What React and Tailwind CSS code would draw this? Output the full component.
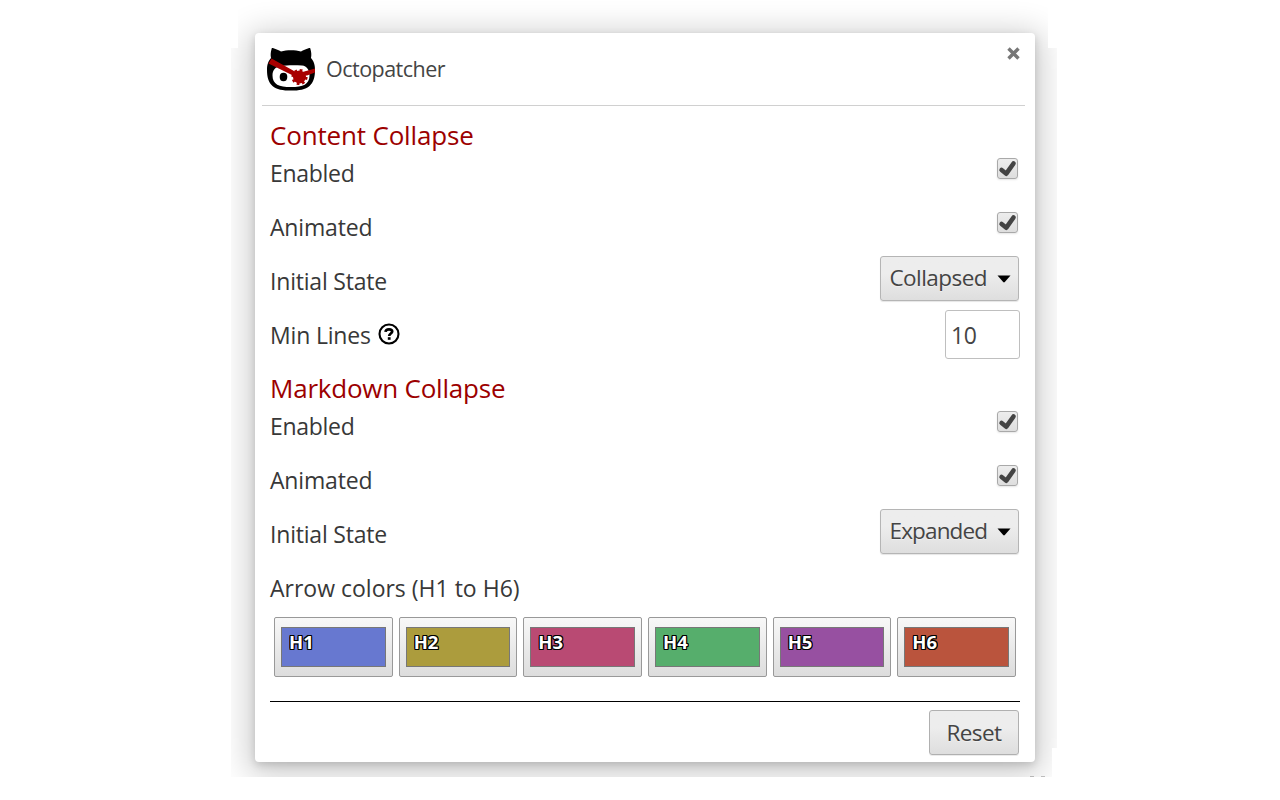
import React from "react";

const swatches = [
  { name: "H1", color: "bg-[#6778d0]" },
  { name: "H2", color: "bg-[#ac9c3d]" },
  { name: "H3", color: "bg-[#b94a73]" },
  { name: "H4", color: "bg-[#56ae6c]" },
  { name: "H5", color: "bg-[#9750a1]" },
  { name: "H6", color: "bg-[#ba543d]" },
];

function Logo() {
  return (
    <svg className="h-12 w-12 shrink-0" viewBox="0 0 48 48">
      <path
        d="M4.5 3.2C4.6 1.8 5.3 1.8 6.5 2.2C9.3 2.9 11.6 4.2 14 5.4C20 3.8 28 3.8 34 5.4C36.4 4.2 38.7 2.9 41.5 2.2C42.7 1.8 43.4 1.8 43.5 3.2C44.4 6.5 44.6 9 44 12C46.8 15.4 48 18.500 48 24C48 31 46.500 36.500 42.500 40C38.500 43.600 32 44.600 24 44.600C16 44.600 9.500 43.600 5.500 40C1.500 36.500 0 31 0 24C0 18.500 1.200 15.400 4 12C3.400 9 3.600 6.500 4.500 3.200Z"
        fill="#000"
      />
      <path
        d="M14 20C20 19 28 19 35 19.500C40 20 42.500 24 42.500 29.500C42.500 38.500 36 41 24 41C12 41 5.500 38.500 5.500 29.500C5.500 24 8.500 20.500 14 20Z"
        fill="#fff"
      />
      <ellipse cx="16.500" cy="31" rx="3.800" ry="4.200" fill="#000" />
      <path d="M4.500 12.500L27 25L32 27L48 22.500V26.500L40 29.500L26 29.500L1.500 17.500Z" fill="#a80000" />
      <circle cx="32.500" cy="31" r="6.500" fill="#a80000" />
      <circle cx="32.500" cy="31" r="6.900" fill="none" stroke="#a80000" strokeWidth="2.400" strokeDasharray="2.700 2.720" />
    </svg>
  );
}

function CheckBox() {
  return (
    <span className="mt-[11px] mr-[2px] block h-[21px] w-[21px] rounded-[3px] border border-[#a9a9a9] bg-linear-to-b from-[#ededed] to-[#dedede] shadow-[0_1px_2px_rgba(0,0,0,0.1)]">
      <svg className="h-[19px] w-[19px]" viewBox="0 0 19 19">
        <path d="M3.600 11L8.300 14.700L15.500 4.500" fill="none" stroke="#444" strokeWidth="4.600" strokeLinecap="round" strokeLinejoin="round" />
      </svg>
    </span>
  );
}

function SelectBox({ value, spacing }) {
  return (
    <button className="mt-px mr-px flex h-[45px] w-[139px] items-center justify-between rounded-[3px] border border-[#b5b5b5] bg-linear-to-b from-[#ededed] from-38% to-[#dedede] pr-[7px] pl-[8.500px] text-[#444] shadow-[0_1px_1px_rgba(0,0,0,0.1)]">
      <span className={`h-[43px] whitespace-nowrap text-[22.5px] leading-[41px] [text-shadow:0_1px_0_#f0f0f0] ${spacing}`}>{value}</span>
      <svg className="h-[8px] w-[14px] shrink-0" viewBox="0 0 14 8">
        <path d="M0.500 0.500H13.500L7.800 7Q7 7.800 6.200 7Z" fill="#000" />
      </svg>
    </button>
  );
}

function Row({ label, spacing, children }) {
  return (
    <div className="flex h-[54px] items-start justify-between">
      <span className={`flex whitespace-nowrap leading-[52px] ${spacing}`}>{label}</span>
      {children}
    </div>
  );
}

function Heading({ children, spacing }) {
  return <h2 className={`h-[37px] whitespace-nowrap text-[26px] leading-[51px] text-[#9c0000] ${spacing}`}>{children}</h2>;
}

export default function App() {
  return (
    <main className="h-[800px] w-full overflow-hidden bg-white pt-[33px] pl-[255px] font-['Open_Sans',sans-serif] text-[23px] text-[#383838]">
      <section className="flex h-[729px] w-[780px] flex-col rounded-[4px] bg-white shadow-[0_6px_32px_7px_rgba(0,0,0,0.2),0_3px_9px_rgba(0,0,0,0.15)] [clip-path:polygon(-17px_-33px,793px_-33px,793px_15px,802px_15px,802px_715px,797px_715px,797px_744px,-24px_744px,-24px_15px,-17px_15px)]">
        <header className="mr-[10px] ml-[7px] flex h-[73px] items-start justify-between border-b border-[#d0d0d0] pl-[5px]">
          <div className="flex pt-[13px]">
            <Logo />
            <h1 className="ml-[11px] whitespace-nowrap text-[21.5px] leading-[46px] tracking-[-0.52px] text-[#444]">Octopatcher</h1>
          </div>
          <svg className="mt-[14px] mr-[5px] h-[13px] w-[13px]" viewBox="0 0 13 13">
            <path d="M1.500 1.500L11.500 11.500M11.500 1.500L1.500 11.500" stroke="#777" strokeWidth="3.400" />
          </svg>
        </header>
        <div className="mx-[15px] flex flex-col pt-1">
          <Heading spacing="tracking-[-0.17px]">Content Collapse</Heading>
          <Row label="Enabled" spacing="tracking-[-0.3px]"><CheckBox /></Row>
          <Row label="Animated" spacing="tracking-[-0.17px]"><CheckBox /></Row>
          <Row label="Initial State" spacing="tracking-[-0.2px]"><SelectBox value="Collapsed" spacing="tracking-[-0.55px]" /></Row>
          <Row
            spacing="tracking-[-0.17px]"
            label={
              <>
                Min Lines
                <svg className="mt-[13.5px] ml-[7px] h-[22px] w-[22px]" viewBox="0 0 22 22" fill="none" stroke="#000">
                  <circle cx="11" cy="11" r="9.500" strokeWidth="2.100" />
                  <path d="M7.500 8.900C7.700 6.900 9 6.300 11 6.300C13 6.300 14.200 7.100 14.200 8.600C14.200 10.500 11.200 10.600 11.200 13" strokeWidth="2.700" />
                  <path d="M9.800 14.200H12.600V16.800H9.800Z" fill="#000" stroke="none" />
                </svg>
              </>
            }
          >
            <span className="mt-px block h-[49px] w-[75px] rounded-[3px] border border-[#bfbfbf] pl-[5px] leading-[48px] tracking-[-0.3px] text-[#444]">10</span>
          </Row>
          <Heading spacing="tracking-[-0.22px]">Markdown Collapse</Heading>
          <Row label="Enabled" spacing="tracking-[-0.3px]"><CheckBox /></Row>
          <Row label="Animated" spacing="tracking-[-0.17px]"><CheckBox /></Row>
          <Row label="Initial State" spacing="tracking-[-0.2px]"><SelectBox value="Expanded" spacing="tracking-[-0.85px]" /></Row>
          <Row label="Arrow colors (H1 to H6)" spacing="tracking-[0px]" />
          <div className="mt-px mr-1 ml-1 grid h-[60px] grid-cols-6 gap-1.5">
            {swatches.map((s) => (
              <div key={s.name} className="rounded-[2px] border border-[#999] bg-linear-to-b from-[#f8f8f8] to-[#dddddd] px-1.5 pt-[9px]">
                <div className={`h-10 border border-[#777] pl-[7px] text-[18.500px] leading-[27px] font-bold text-white [text-shadow:1px_1px_0_#000,-1px_-1px_0_#000,1px_-1px_0_#000,-1px_1px_0_#000,1px_0_0_#000,-1px_0_0_#000,0_1px_0_#000,0_-1px_0_#000] ${s.color}`}>
                  {s.name}
                </div>
              </div>
            ))}
          </div>
          <footer className="mt-6 flex justify-end border-t border-black pt-2 pr-px">
            <button className="h-[45px] w-[90px] rounded-[3px] border border-[#b0b0b0] bg-linear-to-b from-[#ededed] from-38% to-[#dedede] text-[22.5px] leading-[43px] tracking-[-0.6px] text-[#444] shadow-[0_1px_0_rgba(0,0,0,0.08)] [text-shadow:0_1px_0_#f0f0f0]">
              Reset
            </button>
          </footer>
        </div>
      </section>
      <svg className="mt-[14px] ml-[774px] h-px w-[16px]" viewBox="0 0 16 1">
        <path d="M1 0.500H5M12 0.500H16" stroke="#c4c4c4" strokeWidth="1" />
      </svg>
    </main>
  );
}
